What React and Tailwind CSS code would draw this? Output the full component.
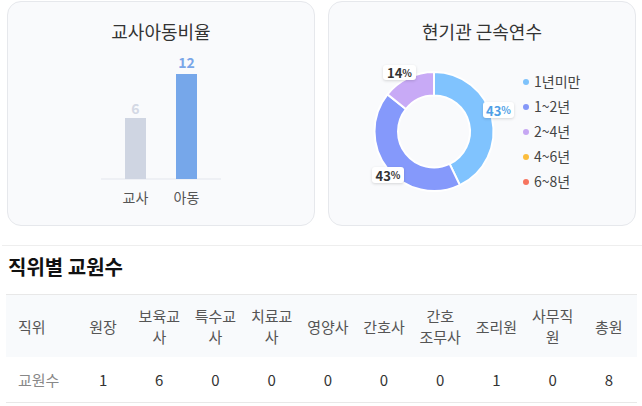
import React from "react";

const font = { fontFamily: '"Noto Sans CJK KR", "Noto Sans", sans-serif' };

function arcPath(cx, cy, R, r, a0, a1) {
  const rad = (a) => ((a - 90) * Math.PI) / 180;
  const p = (rr, a) => [cx + rr * Math.cos(rad(a)), cy + rr * Math.sin(rad(a))];
  const large = a1 - a0 > 180 ? 1 : 0;
  const [x0, y0] = p(R, a0);
  const [x1, y1] = p(R, a1);
  const [x2, y2] = p(r, a1);
  const [x3, y3] = p(r, a0);
  return `M${x0} ${y0} A${R} ${R} 0 ${large} 1 ${x1} ${y1} L${x2} ${y2} A${r} ${r} 0 ${large} 0 ${x3} ${y3} Z`;
}

const segments = [
  { from: 0, to: 154.29, color: "#80c3fe" },
  { from: 154.29, to: 308.57, color: "#8599fb" },
  { from: 308.57, to: 360, color: "#c8aaf6" },
];

const legend = [
  { label: "1년미만", color: "#7ec2fb" },
  { label: "1~2년", color: "#8497f8" },
  { label: "2~4년", color: "#c6a7f3" },
  { label: "4~6년", color: "#fbbd3d" },
  { label: "6~8년", color: "#f7745f" },
];

const columns = ["원장", "보육교사", "특수교사", "치료교사", "영양사", "간호사", ["간호", "조무사"], "조리원", "사무직원", "총원"];
const counts = [1, 6, 0, 0, 0, 0, 0, 1, 0, 8];

function Chip({ value, className, color }) {
  return (
    <div
      className={`absolute flex items-center justify-center rounded-[3px] bg-white shadow-[0_1px_3px_rgba(0,0,0,0.15)] font-bold text-[13px] leading-none ${className}`}
      style={{ color }}
    >
      {value}
      <span className="text-[10px]">%</span>
    </div>
  );
}

function BarCard() {
  return (
    <div className="h-[225px] rounded-[14px] border border-[#e6e8ec] bg-[#f9fafc]">
      <div className="pt-[17px] text-center text-[18px] leading-[24px] text-[#333]">교사아동비율</div>
      <svg width="306" height="177" className="block">
        <line x1="93" y1="136" x2="213" y2="136" stroke="#e3e6ed" strokeWidth="1" />
        <rect x="117" y="75" width="21" height="61" fill="#cfd5e2" />
        <rect x="168" y="31" width="21" height="105" fill="#76a7ea" />
        <text x="127.5" y="71" textAnchor="middle" fontSize="14" fontWeight="700" fill="#d3d8e4">6</text>
        <text x="178.5" y="25" textAnchor="middle" fontSize="14" fontWeight="700" fill="#7aa6e8">12</text>
        <text x="127.5" y="160" textAnchor="middle" fontSize="14" fill="#555">교사</text>
        <text x="178.5" y="160" textAnchor="middle" fontSize="14" fill="#555">아동</text>
      </svg>
    </div>
  );
}

function DonutCard() {
  return (
    <div className="h-[225px] rounded-[14px] border border-[#e6e8ec] bg-[#f9fafc]">
      <div className="pt-[17px] text-center text-[18px] leading-[24px] text-[#333]">현기관 근속연수</div>
      <div className="flex h-[177px]">
        <div className="relative h-[177px] w-[190px] shrink-0">
          <svg width="190" height="177" className="block">
            {segments.map((s) => (
              <path key={s.from} d={arcPath(105, 88.5, 59.5, 36, s.from, s.to)} fill={s.color} stroke="#fff" strokeWidth="2" />
            ))}
          </svg>
          <Chip value="14" color="#333" className="left-[54px] top-[22px] h-[15px] w-[33px]" />
          <Chip value="43" color="#4f9fe6" className="left-[154px] top-[59px] h-[16px] w-[31px]" />
          <Chip value="43" color="#333" className="left-[43px] top-[124px] h-[16px] w-[32px]" />
        </div>
        <div className="flex flex-col justify-center pl-[4px]">
          {legend.map((l) => (
            <div key={l.label} className="flex h-[25px] items-center gap-[5px] text-[14px] text-[#444]">
              <span className="h-[6px] w-[6px] rounded-full" style={{ background: l.color }} />
              {l.label}
            </div>
          ))}
        </div>
      </div>
    </div>
  );
}

export default function App() {
  return (
    <div className="w-full bg-white pt-[1px]" style={font}>
      <div className="grid grid-cols-2 gap-[13px] pl-[7px] pr-[6px]">
        <BarCard />
        <DonutCard />
      </div>

      <section className="ml-[2px] mt-[19px] border-t border-[#eeeeee]">
        <h2 className="pl-[6px] pt-[7px] text-[20px] font-bold leading-[27px] text-[#111]">직위별 교원수</h2>
        <table className="ml-[4px] mt-[14px] w-[631px] table-fixed border-collapse text-[15px] leading-[21px]">
          <colgroup>
            <col className="w-[69px]" />
            {columns.map((c, i) => (
              <col key={i} />
            ))}
          </colgroup>
          <thead>
            <tr className="border-t border-[#e8e8e8] bg-[#f8fafc]">
              <th className="py-[10px] pl-[12px] text-left font-normal text-[#555]">직위</th>
              {columns.map((c, i) => (
                <th key={i} className="px-[6px] py-[10px] text-center font-normal text-[#555]">
                  {Array.isArray(c) ? (
                    <>
                      {c[0]}
                      <br />
                      {c[1]}
                    </>
                  ) : (
                    c
                  )}
                </th>
              ))}
            </tr>
          </thead>
          <tbody>
            <tr className="border-b border-[#e8e8e8]">
              <td className="py-[12px] pl-[12px] text-left text-[#888]">교원수</td>
              {counts.map((n, i) => (
                <td key={i} className="px-[6px] py-[12px] text-center text-[#333]">
                  {n}
                </td>
              ))}
            </tr>
          </tbody>
        </table>
      </section>
    </div>
  );
}
